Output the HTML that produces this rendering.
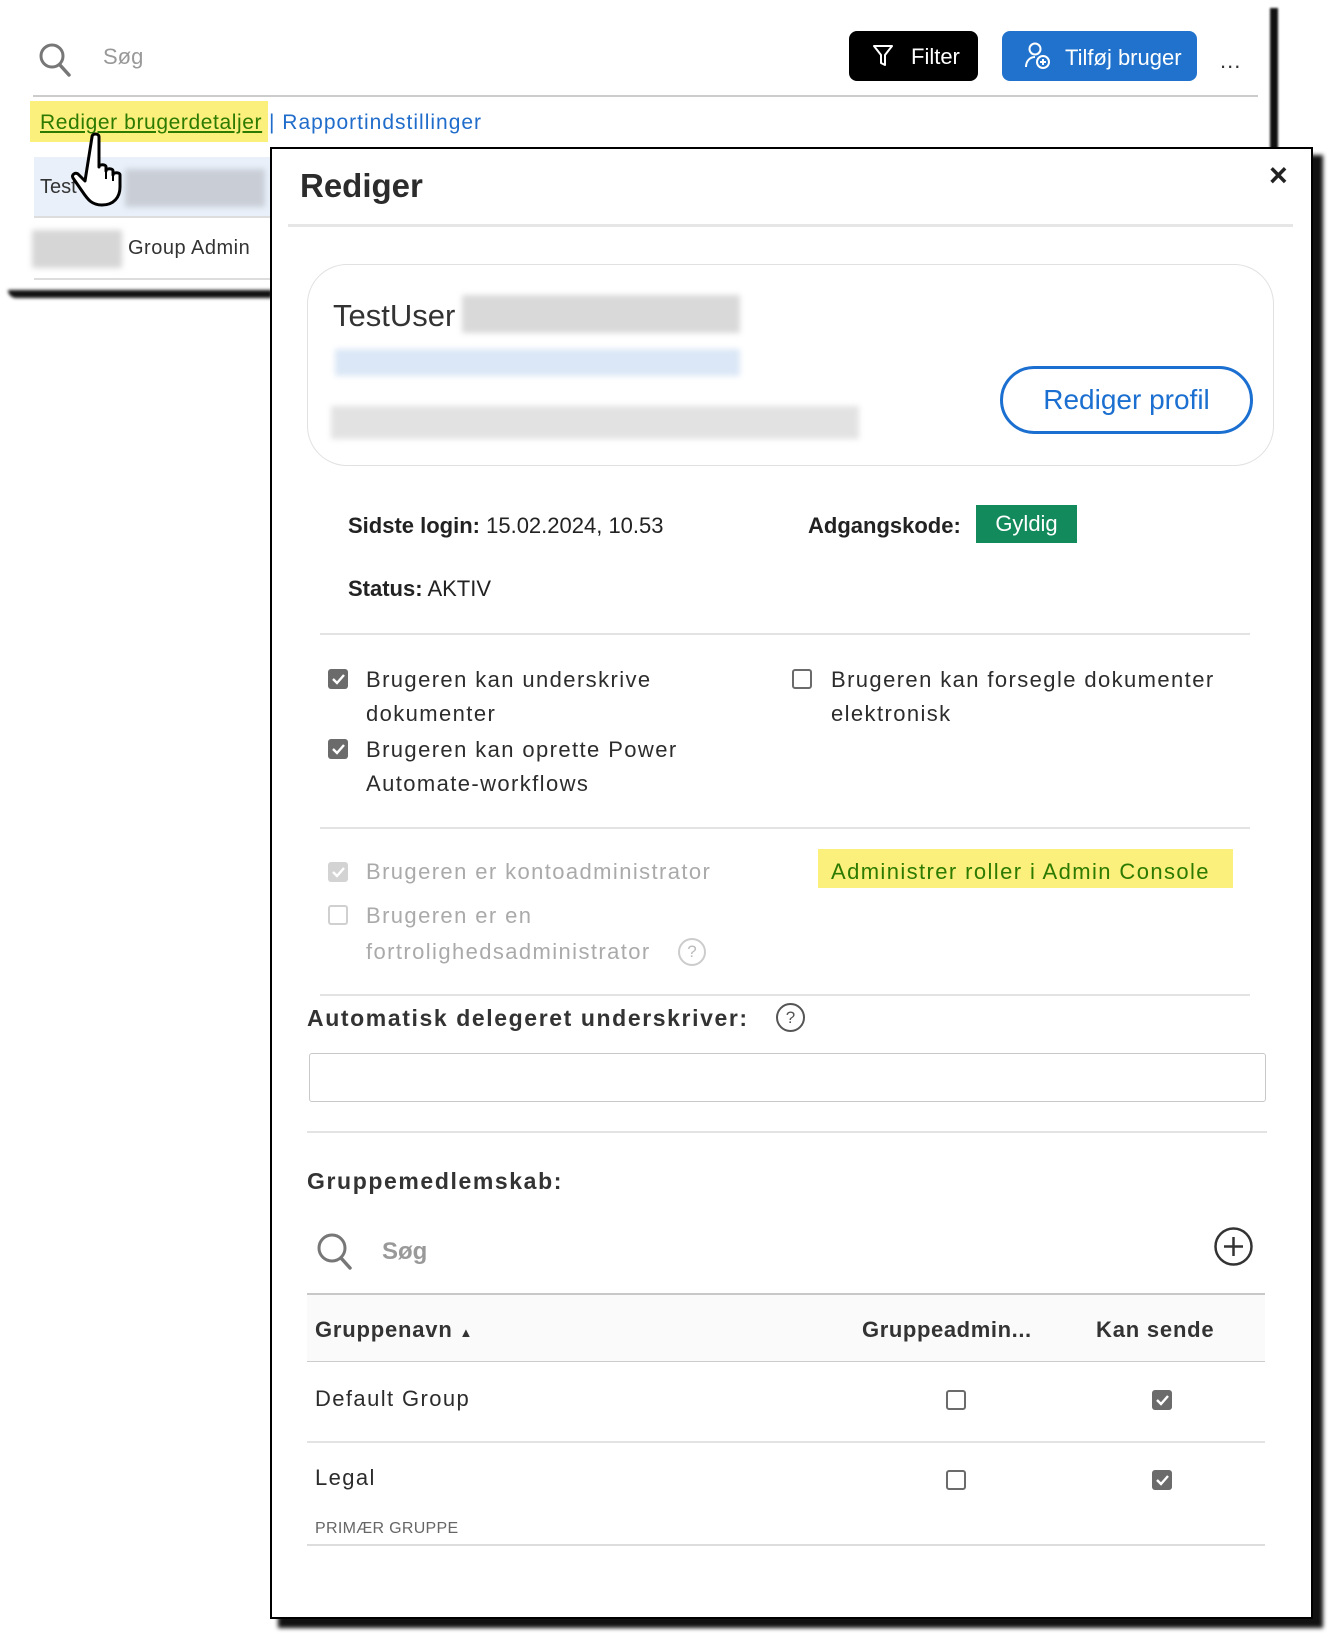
<!DOCTYPE html>
<html><head><meta charset="utf-8"><style>
*{margin:0;padding:0;box-sizing:border-box}
body{width:1331px;height:1636px;background:#fff;position:relative;overflow:hidden;font-family:"Liberation Sans",sans-serif;color:#2c2c2c}
.a{position:absolute;white-space:nowrap}
.t{position:absolute;white-space:nowrap;height:30px;line-height:30px}
.w{letter-spacing:1.4px}
.hr{position:absolute;height:2px;background:#e3e3e3}
.blur{position:absolute;filter:blur(3px)}
.cb{position:absolute;width:20px;height:20px;border-radius:3px}
</style></head><body>

<div class="a" style="left:0;top:0;width:1272px;height:298px;background:#fff"></div>
<div class="a" style="left:1270px;top:8px;width:8px;height:145px;background:#111;filter:blur(1px)"></div>
<div class="a" style="left:8px;top:290px;width:264px;height:8px;background:#111;filter:blur(1.5px);border-radius:0 0 0 8px"></div>

<svg class="a" style="left:38px;top:42px" width="34" height="36" viewBox="0 0 34 36"><circle cx="14" cy="14" r="11" fill="none" stroke="#777" stroke-width="3"/><line x1="22" y1="23" x2="31" y2="33" stroke="#777" stroke-width="3.5" stroke-linecap="round"/></svg>
<div class="t" style="left:103px;top:42px;font-size:22px;color:#999">Søg</div>

<div class="a" style="left:849px;top:31px;width:129px;height:50px;background:#000;border-radius:8px"></div>
<svg class="a" style="left:872px;top:44px" width="22" height="24" viewBox="0 0 22 24"><path d="M2 2h18l-7 9v10l-4-2v-8z" fill="none" stroke="#fff" stroke-width="2" stroke-linejoin="round"/></svg>
<div class="t" style="left:911px;top:42px;font-size:22px;color:#fff">Filter</div>

<div class="a" style="left:1002px;top:31px;width:195px;height:50px;background:#2072cc;border-radius:8px"></div>
<svg class="a" style="left:1024px;top:41px" width="28" height="30" viewBox="0 0 28 30"><circle cx="11" cy="8" r="5.5" fill="none" stroke="#fff" stroke-width="2"/><path d="M2 26c0-6 4-10 9-10" fill="none" stroke="#fff" stroke-width="2"/><circle cx="19" cy="21" r="6" fill="none" stroke="#fff" stroke-width="2"/><path d="M19 18v6M16 21h6" stroke="#fff" stroke-width="2"/></svg>
<div class="t" style="left:1065px;top:43px;font-size:22px;color:#fff">Tilføj bruger</div>
<div class="t" style="left:1220px;top:46px;font-size:22px;color:#333;letter-spacing:1px">...</div>

<div class="a" style="left:33px;top:95px;width:1225px;height:2px;background:#ccc"></div>
<div class="a" style="left:30px;top:101px;width:238px;height:41px;background:#fbf07b"></div>
<div class="t" style="left:40px;top:108px;font-size:21px;color:#2c7a00;text-decoration:underline;letter-spacing:0.6px">Rediger brugerdetaljer</div>
<div class="t" style="left:269px;top:108px;font-size:21px;color:#1f6ccb;letter-spacing:1px">| Rapportindstillinger</div>

<div class="a" style="left:34px;top:157px;width:236px;height:59px;background:#e9f0fa"></div>
<div class="t" style="left:40px;top:172px;font-size:20px;color:#333">Test</div>
<div class="blur" style="left:125px;top:169px;width:140px;height:38px;background:#c9ced6"></div>
<div class="a" style="left:34px;top:216px;width:236px;height:2px;background:#ddd"></div>
<div class="blur" style="left:32px;top:230px;width:90px;height:38px;background:#d6d6d6"></div>
<div class="t" style="left:128px;top:233px;font-size:20px;color:#333;letter-spacing:0.5px">Group Admin</div>
<div class="a" style="left:34px;top:278px;width:236px;height:2px;background:#ddd"></div>

<svg class="a" style="left:68px;top:131px" width="66" height="78" viewBox="0 0 66 78"><path d="M24 6c0-4 7-4 7 0v30c0-3 7-3 7 0v4c0-3 7-3 7 0v4c0-3 7-3 7 0v12c0 10-6 18-18 18c-10 0-14-5-20-14l-9-13c-2-3 2-6 5-4l7 7z" fill="#fff" stroke="#000" stroke-width="3" stroke-linejoin="round"/><path d="M38 38v10M45 42v8M52 46v6" stroke="#000" stroke-width="2"/></svg>

<div class="a" style="left:278px;top:155px;width:1045px;height:1473px;background:#111;filter:blur(2px)"></div>
<div class="a" style="left:270px;top:147px;width:1043px;height:1472px;background:#fff;border:2px solid #000"></div>

<div class="t" style="left:300px;top:168px;font-size:33px;font-weight:bold;color:#2c2c2c;height:36px;line-height:36px">Rediger</div>
<div class="t" style="left:1269px;top:157px;font-size:32px;font-weight:bold;color:#222;height:36px;line-height:36px">×</div>
<div class="a" style="left:288px;top:224px;width:1005px;height:3px;background:#e6e6e6"></div>

<div class="a" style="left:307px;top:264px;width:967px;height:202px;border:1.5px solid #e1e1e1;border-radius:40px"></div>
<div class="t" style="left:333px;top:298px;font-size:31px;color:#333;height:36px;line-height:36px">TestUser</div>
<div class="blur" style="left:462px;top:295px;width:278px;height:38px;background:#d9d9d9"></div>
<div class="blur" style="left:335px;top:349px;width:405px;height:27px;background:#dbe7f6"></div>
<div class="blur" style="left:331px;top:406px;width:528px;height:33px;background:#e2e2e2"></div>
<div class="a" style="left:1000px;top:366px;width:253px;height:68px;border:3px solid #1b6fd0;border-radius:34px"></div>
<div class="t" style="left:1000px;top:385px;width:253px;text-align:center;font-size:28px;color:#1b6fd0">Rediger profil</div>

<div class="t" style="left:348px;top:511px;font-size:22px;color:#222"><b>Sidste login:</b> 15.02.2024, 10.53</div>
<div class="t" style="left:808px;top:511px;font-size:22px;color:#222;font-weight:bold">Adgangskode:</div>
<div class="a" style="left:976px;top:505px;width:101px;height:38px;background:#128a5b"></div>
<div class="t" style="left:976px;top:509px;width:101px;text-align:center;font-size:22px;color:#fff">Gyldig</div>
<div class="t" style="left:348px;top:574px;font-size:22px;color:#222"><b>Status:</b> AKTIV</div>

<div class="hr" style="left:320px;top:633px;width:930px"></div>

<div class="cb" style="left:328px;top:669px;background:#6b6b6b"></div>
<svg class="a" style="left:328px;top:669px" width="20" height="20"><path d="M5 10l4 4 7-8" fill="none" stroke="#fff" stroke-width="2.4"/></svg>
<div class="t w" style="left:366px;top:665px;font-size:22px">Brugeren kan underskrive</div>
<div class="t w" style="left:366px;top:699px;font-size:22px">dokumenter</div>
<div class="cb" style="left:328px;top:739px;background:#6b6b6b"></div>
<svg class="a" style="left:328px;top:739px" width="20" height="20"><path d="M5 10l4 4 7-8" fill="none" stroke="#fff" stroke-width="2.4"/></svg>
<div class="t w" style="left:366px;top:735px;font-size:22px">Brugeren kan oprette Power</div>
<div class="t w" style="left:366px;top:769px;font-size:22px">Automate-workflows</div>
<div class="cb" style="left:792px;top:669px;border:2.5px solid #6b6b6b"></div>
<div class="t w" style="left:831px;top:665px;font-size:22px">Brugeren kan forsegle dokumenter</div>
<div class="t w" style="left:831px;top:699px;font-size:22px">elektronisk</div>

<div class="hr" style="left:320px;top:827px;width:930px"></div>

<div class="cb" style="left:328px;top:862px;background:#d3d3d3"></div>
<svg class="a" style="left:328px;top:862px" width="20" height="20"><path d="M5 10l4 4 7-8" fill="none" stroke="#fff" stroke-width="2.4"/></svg>
<div class="t w" style="left:366px;top:857px;font-size:22px;color:#aaa">Brugeren er kontoadministrator</div>
<div class="cb" style="left:328px;top:905px;border:2.5px solid #d0d0d0"></div>
<div class="t w" style="left:366px;top:901px;font-size:22px;color:#aaa">Brugeren er en</div>
<div class="t w" style="left:366px;top:937px;font-size:22px;color:#aaa">fortrolighedsadministrator</div>
<div class="a" style="left:678px;top:938px;width:28px;height:28px;border:2px solid #ccc;border-radius:50%;text-align:center;line-height:24px;font-size:17px;color:#bbb">?</div>
<div class="a" style="left:818px;top:849px;width:415px;height:39px;background:#fbf07b"></div>
<div class="t w" style="left:831px;top:857px;font-size:22px;color:#2c7a00">Administrer roller i Admin Console</div>

<div class="hr" style="left:320px;top:994px;width:930px"></div>

<div class="t" style="left:307px;top:1003px;font-size:23px;font-weight:bold;color:#333;letter-spacing:1.6px">Automatisk delegeret underskriver:</div>
<div class="a" style="left:776px;top:1003px;width:29px;height:29px;border:2px solid #555;border-radius:50%;text-align:center;line-height:25px;font-size:17px;color:#555">?</div>
<div class="a" style="left:309px;top:1053px;width:957px;height:49px;border:1.5px solid #c8c8c8;border-radius:3px"></div>
<div class="hr" style="left:307px;top:1131px;width:960px"></div>

<div class="t" style="left:307px;top:1166px;font-size:23px;font-weight:bold;color:#333;letter-spacing:1.6px">Gruppemedlemskab:</div>

<svg class="a" style="left:315px;top:1231px" width="40" height="40" viewBox="0 0 40 40"><circle cx="17" cy="17" r="13" fill="none" stroke="#777" stroke-width="3"/><line x1="26" y1="27" x2="35" y2="37" stroke="#777" stroke-width="3.5" stroke-linecap="round"/></svg>
<div class="t" style="left:382px;top:1237px;font-size:24px;color:#999;font-weight:bold">Søg</div>
<svg class="a" style="left:1213px;top:1226px" width="41" height="41" viewBox="0 0 41 41"><circle cx="20.5" cy="20.5" r="18" fill="none" stroke="#333" stroke-width="2.5"/><path d="M20.5 11v19M11 20.5h19" stroke="#333" stroke-width="2.5"/></svg>

<div class="a" style="left:307px;top:1293px;width:958px;height:69px;background:#fafafa;border-top:2px solid #c8c8c8;border-bottom:1.5px solid #ccc"></div>
<div class="t" style="left:315px;top:1315px;font-size:22px;font-weight:bold;color:#333;letter-spacing:0.8px">Gruppenavn <span style="font-size:13px">▲</span></div>
<div class="t" style="left:862px;top:1315px;font-size:22px;color:#333;font-weight:bold;letter-spacing:0.6px">Gruppeadmin...</div>
<div class="t" style="left:1096px;top:1315px;font-size:22px;color:#333;font-weight:bold;letter-spacing:0.8px">Kan sende</div>

<div class="t w" style="left:315px;top:1384px;font-size:22px">Default Group</div>
<div class="cb" style="left:946px;top:1390px;border:2.5px solid #6b6b6b"></div>
<div class="cb" style="left:1152px;top:1390px;background:#6b6b6b"></div>
<svg class="a" style="left:1152px;top:1390px" width="20" height="20"><path d="M5 10l4 4 7-8" fill="none" stroke="#fff" stroke-width="2.4"/></svg>
<div class="hr" style="left:307px;top:1441px;width:958px"></div>

<div class="t w" style="left:315px;top:1463px;font-size:22px">Legal</div>
<div class="cb" style="left:946px;top:1470px;border:2.5px solid #6b6b6b"></div>
<div class="cb" style="left:1152px;top:1470px;background:#6b6b6b"></div>
<svg class="a" style="left:1152px;top:1470px" width="20" height="20"><path d="M5 10l4 4 7-8" fill="none" stroke="#fff" stroke-width="2.4"/></svg>
<div class="t" style="left:315px;top:1514px;font-size:16px;color:#666;letter-spacing:0.3px">PRIMÆR GRUPPE</div>
<div class="hr" style="left:307px;top:1544px;width:958px;background:#ddd"></div>

</body></html>
